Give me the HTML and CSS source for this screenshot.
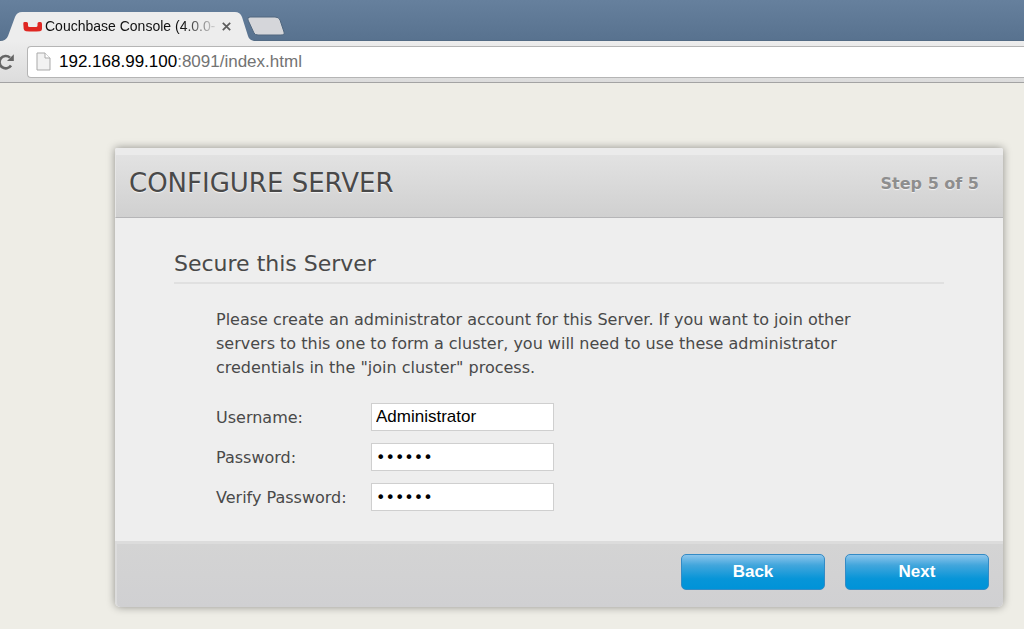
FILE: index.html
```html
<!DOCTYPE html>
<html lang="en">
<head>
<meta charset="utf-8">
<title>Couchbase Console (4.0.0)</title>
<meta name="viewport" content="width=device-width, initial-scale=1">
<link rel="stylesheet" href="styles.css">
</head>
<body>
<header class="browser">
  <div class="tab-strip">
    <div class="tab">
      <svg class="tab-shape" viewBox="0 0 254 29" aria-hidden="true"><path d="M0 29 Q6 29 8 24 L15 5 Q17 0 22 0 H235 Q240 0 242 5 L248 24 Q249 28 254 29 Z" fill="#ededed"/></svg>
      <svg class="favicon" viewBox="0 0 20 12" aria-hidden="true"><path d="M1.5 1 H3.5 Q5 1 5 2.5 V4.5 Q5 6 6.5 6 H13 Q14.5 6 14.5 4.5 V2.5 Q14.5 1 16 1 H17.5 Q19 1 19 3 V8 Q19 10 17 10.2 Q10 10.8 3 10.2 Q1 10 0.7 8 L0.3 3 Q0 1 1.5 1Z" fill="#df2722"/></svg>
      <span class="tab-title">Couchbase Console (4.0.0-</span>
      <button class="tab-close" type="button" aria-label="Close tab"><svg viewBox="0 0 9 9"><path d="M0.8 0.8 L8.2 8.2 M8.2 0.8 L0.8 8.2" stroke="#5c5c5c" stroke-width="1.7"/></svg></button>
    </div>
    <button class="new-tab" type="button" aria-label="New tab"><svg viewBox="0 0 38 20"><path d="M3 1 H28 Q32 1 33 4 L37 16 Q38 19 34 19 H11 Q8 19 7 17 L1 4 Q0 1 3 1Z" fill="#d5d6da" stroke="#50677f"/></svg></button>
  </div>
  <div class="toolbar">
    <button class="reload" type="button" aria-label="Reload"><svg viewBox="0 0 14 18"><path d="M10 4.6 A6.2 6.2 0 1 0 11 12.5" fill="none" stroke="#656565" stroke-width="2.6"/><path d="M13.8 1.2 V8 H7 Z" fill="#656565"/></svg></button>
    <div class="address">
      <svg class="page-icon" viewBox="0 0 15 19" aria-hidden="true"><path d="M1 1 H9 L14 6 V18 H1Z" fill="#f2f2f2" stroke="#a9a9a9"/><path d="M9 1 V6 H14" fill="#fff" stroke="#a9a9a9"/></svg>
      <span class="url"><span class="host">192.168.99.100</span>:8091/index.html</span>
    </div>
  </div>
</header>
<main class="page">
  <form class="dialog">
    <header class="dialog-header">
      <h1>CONFIGURE SERVER</h1>
      <span class="step">Step 5 of 5</span>
    </header>
    <section class="dialog-body">
      <h2>Secure this Server</h2>
      <div class="content">
        <p>Please create an administrator account for this Server. If you want to join other servers to this one to form a cluster, you will need to use these administrator credentials in the "join cluster" process.</p>
        <div class="fields">
          <label for="username">Username:</label>
          <input id="username" type="text" value="Administrator">
          <label for="password">Password:</label>
          <input id="password" type="password" value="secret">
          <label for="verify">Verify Password:</label>
          <input id="verify" type="password" value="secret">
        </div>
      </div>
    </section>
    <footer class="dialog-footer">
      <button class="action" type="button">Back</button>
      <button class="action" type="submit">Next</button>
    </footer>
  </form>
</main>
</body>
</html>
```
FILE: styles.css
```css
* { box-sizing: border-box; }

body {
  margin: 0;
  background: #eeede6;
  color: #494949;
  font-family: Verdana, "DejaVu Sans", sans-serif;
  font-size: 16px;
}

button {
  padding: 0;
  border: 0;
  background: none;
}

svg { display: block; }

.tab-strip {
  display: flex;
  align-items: flex-end;
  height: 41px;
  background: linear-gradient(#66809d, #58728f);
  border-bottom: 1px solid #536b84;
}

.tab {
  position: relative;
  display: flex;
  align-items: center;
  width: 247px;
  height: 29px;
  margin-bottom: -1px;
  padding: 0 16px 0 23px;
  font-family: "Liberation Sans", Arial, sans-serif;
  font-size: 14px;
  color: #111;
}

.tab-shape {
  position: absolute;
  top: 0;
  left: 0;
  width: 254px;
  height: 29px;
}

.favicon {
  position: relative;
  width: 20px;
  height: 12px;
  margin-right: 2px;
}

.tab-title {
  position: relative;
  padding-bottom: 1px;
  white-space: nowrap;
  -webkit-mask-image: linear-gradient(90deg, #000 138px, transparent 174px);
  mask-image: linear-gradient(90deg, #000 138px, transparent 174px);
}

.tab-close {
  position: relative;
  margin-left: auto;
}

.tab-close svg {
  width: 9px;
  height: 9px;
}

.new-tab { margin-bottom: 4px; }

.new-tab svg {
  width: 38px;
  height: 20px;
}

.toolbar {
  display: flex;
  align-items: center;
  height: 42px;
  background: linear-gradient(#ededed, #dcdcdc);
  border-bottom: 1px solid #a3a3a3;
}

.reload svg {
  width: 14px;
  height: 18px;
}

.address {
  display: flex;
  flex: 1;
  align-items: center;
  gap: 8px;
  height: 32px;
  margin-left: 13px;
  padding-left: 8px;
  background: #fff;
  border: 1px solid #b5b5b5;
  border-right: 0;
  border-radius: 4px 0 0 4px;
}

.page-icon {
  width: 15px;
  height: 19px;
}

.url {
  font-family: "Liberation Sans", Arial, sans-serif;
  font-size: 17px;
  color: #737373;
}

.host { color: #000; }

.page { padding: 65px 21px 22px 115px; }

.dialog {
  background: #eee;
  border-radius: 2px 2px 5px 5px;
  box-shadow: 0 0 8px rgba(0, 0, 0, 0.4);
}

.dialog-header {
  display: flex;
  align-items: center;
  justify-content: space-between;
  height: 70px;
  padding: 0 24px 6px 13px;
  background: linear-gradient(#e2e2e2, #d0d0d0);
  border-top: 7px solid #ebebeb;
  border-bottom: 1px solid #b5b5b7;
  border-left: 1px solid #e6e6e6;
  border-radius: 2px 2px 0 0;
  text-shadow: 0 1px 1px #f4f4f4;
}

h1 {
  margin: 0;
  font-size: 26px;
  font-weight: 400;
  line-height: 30px;
}

.step {
  font-size: 16px;
  font-weight: 700;
  color: #8e8e8e;
}

.dialog-body { padding: 31px 59px 30px; }

h2 {
  margin: 0;
  padding-bottom: 3px;
  border-bottom: 2px solid #e0e0e0;
  font-size: 22px;
  font-weight: 400;
  line-height: 30px;
}

.content { padding: 24px 42px 0; }

p {
  max-width: 660px;
  margin: 0;
  line-height: 24px;
}

.fields {
  display: grid;
  grid-template-columns: 155px 183px;
  row-gap: 12px;
  align-items: center;
  margin-top: 23px;
}

input {
  width: 100%;
  height: 28px;
  padding: 0 4px;
  background: #fff;
  border: 1px solid #cfcfcf;
  border-radius: 0;
  color: #000;
  font-family: "Liberation Sans", Arial, sans-serif;
  font-size: 17px;
}

input[type="password"] {
  font-family: "DejaVu Sans", sans-serif;
  font-size: 16px;
}

.dialog-footer {
  display: flex;
  justify-content: flex-end;
  gap: 20px;
  padding: 10px 14px 17px;
  background: linear-gradient(#d4d4d4, #d0d0d2);
  border-top: 3px solid #dcdcdc;
  border-left: 2px solid #dcdcdc;
  border-radius: 0 0 5px 5px;
}

.action {
  width: 144px;
  height: 36px;
  border: 1px solid #348bc5;
  border-radius: 5px;
  background: linear-gradient(#8cc5ec, #42a6dc 30%, #0795d8 70%, #0093d8);
  color: #fff;
  font-family: "Liberation Sans", Arial, sans-serif;
  font-size: 17px;
  font-weight: 700;
}
```
